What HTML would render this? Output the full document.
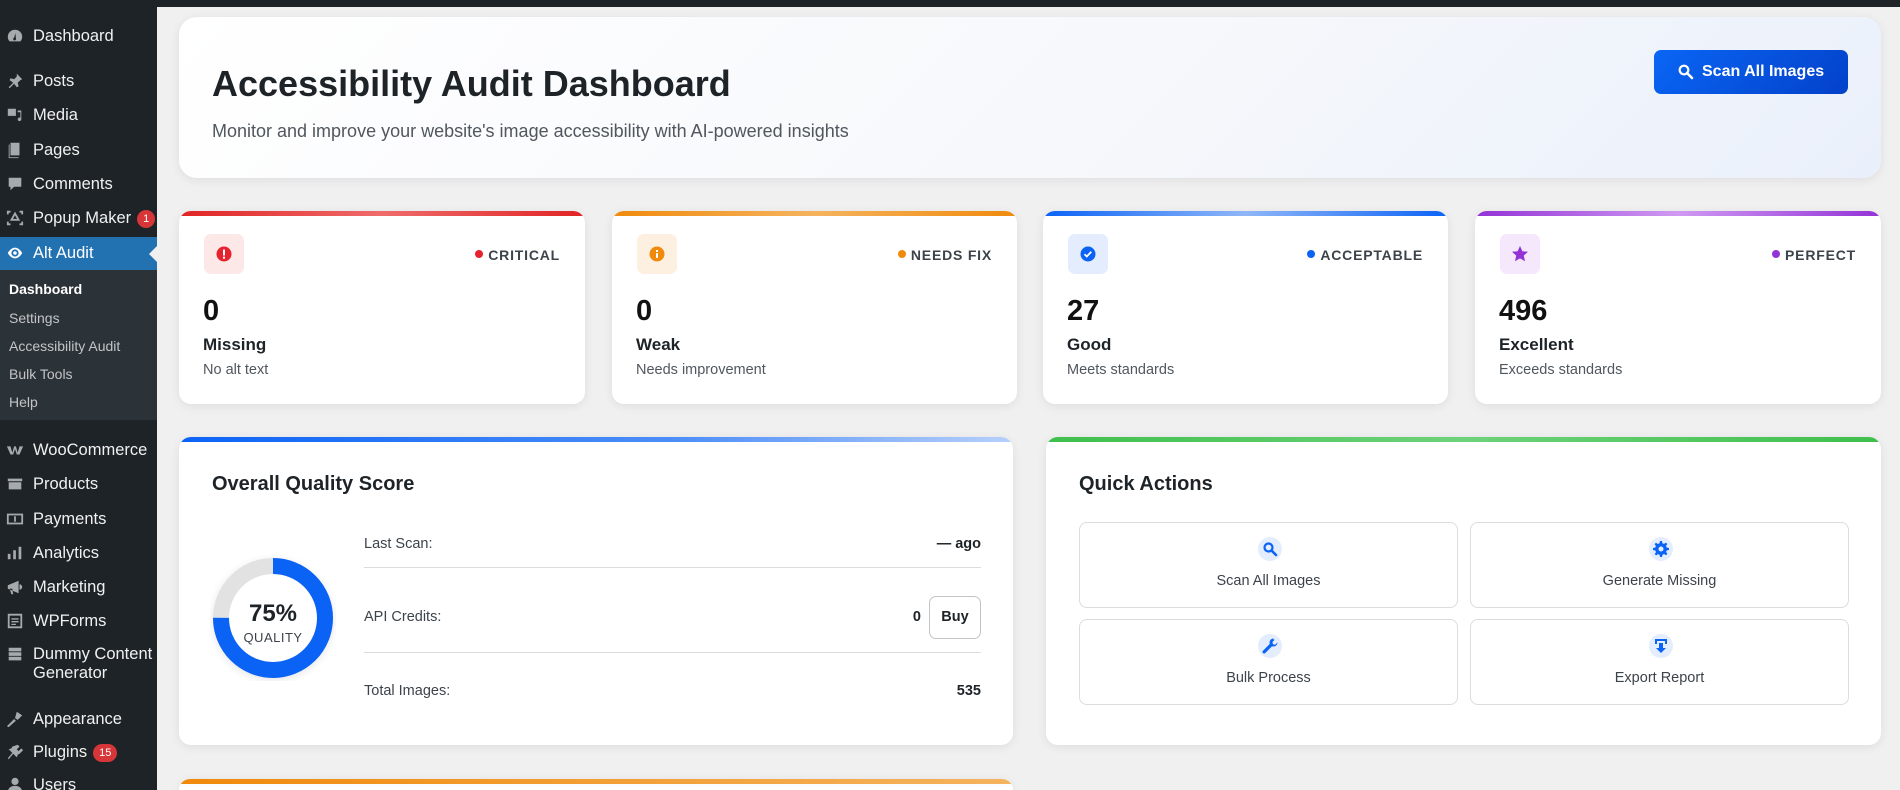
<!DOCTYPE html>
<html style="width:1900px;height:790px;overflow:hidden"><head><meta charset="utf-8"><style>
*{box-sizing:border-box;margin:0;padding:0}
body{width:1900px;height:790px;overflow:hidden;background:#f0f0f1;font-family:"Liberation Sans",Arial,sans-serif;position:relative}
.top{position:absolute;left:0;top:0;width:1900px;height:7px;background:#1d2327}
.side{position:absolute;left:0;top:0;width:157px;height:790px;background:#1d2327;overflow:hidden}
.mi{position:absolute;left:0;width:157px;color:#f0f0f1;font-size:16.5px;line-height:20px;padding-left:33px}
.mi .ic{position:absolute;left:6px;top:1px;width:18px;height:18px;fill:#a7aaad}
.sub{position:absolute;left:0;top:270px;width:157px;height:150px;background:#2c3338}
.si{position:absolute;left:9px;color:#c3c4c7;font-size:14px}
.badge{display:inline-block;background:#d63638;color:#fff;border-radius:10px;font-size:11px;line-height:18px;padding:0 6px;margin-left:6px;vertical-align:1px}
.card{position:absolute;background:#fff;border-radius:12px;box-shadow:0 2px 10px rgba(0,0,0,.08);overflow:hidden}
.bar{position:absolute;left:0;top:0;right:0;height:5px}
.stat .ib{position:absolute;left:25px;top:23px;width:40px;height:40px;border-radius:7px}
.stat .tag{position:absolute;right:25px;top:36px;font-size:14px;font-weight:bold;letter-spacing:.8px;color:#3c434a}
.stat .tag i{display:inline-block;width:8px;height:8px;border-radius:50%;margin-right:5px;vertical-align:2px}
.stat .n{position:absolute;left:24px;top:84px;font-size:29px;font-weight:bold;color:#111}
.stat .l{position:absolute;left:24px;top:124px;font-size:17px;font-weight:bold;color:#1d2327}
.stat .d{position:absolute;left:24px;top:151px;font-size:14.5px;color:#50575e}
h2{position:absolute;font-size:20px;font-weight:bold;color:#1d2327}
.row{position:absolute;left:185px;width:617px;font-size:14.5px;color:#3c434a}
.row b{position:absolute;right:0;color:#1d2327}
.qa{position:absolute;width:379px;height:86px;border:1px solid #dcdcde;border-radius:8px;text-align:center;font-size:14.5px;color:#3c434a}
.qa .c{position:absolute;left:178px;top:14px;width:24px;height:24px;border-radius:50%;background:#e3edfe}
.qa .c svg{position:absolute;left:4px;top:4px;width:16px;height:16px;fill:#0b63f6}
.qa span{position:absolute;left:0;right:0;top:50px}
</style></head><body>
<div class="top"></div>
<div class="side">
 <div class="mi" style="top:26px"><svg class="ic" viewBox="0 0 20 20"><path d="M10 3a8 8 0 0 0-8 8c0 2 .7 3.7 2 5h12a8 8 0 0 0 2-5 8 8 0 0 0-8-8zm1 10a1.5 1.5 0 1 1-2-1l1.5-5 .5 6z"/></svg>Dashboard</div>
 <div class="mi" style="top:71px"><svg class="ic" viewBox="0 0 20 20"><path d="M12 2l6 6-2 1-3 3 1 4-2 1-3-4-5 5-1-1 5-5-4-3 1-2 4 1 3-3z"/></svg>Posts</div>
 <div class="mi" style="top:105px"><svg class="ic" viewBox="0 0 20 20"><path d="M2 3h9v8H2zM13 5h4v10a2 2 0 1 1-1-2V7h-3z"/></svg>Media</div>
 <div class="mi" style="top:140px"><svg class="ic" viewBox="0 0 20 20"><path d="M5 2h10v14H5zM3 4h1v14h10v1H3z"/></svg>Pages</div>
 <div class="mi" style="top:174px"><svg class="ic" viewBox="0 0 20 20"><path d="M3 3h14v10H9l-4 4v-4H3z"/></svg>Comments</div>
 <div class="mi" style="top:208px"><svg class="ic" viewBox="0 0 20 20"><path d="M10 5l4 7H6zM2 6v-3h3M18 6V3h-3M2 14v3h3M18 14v3h-3" fill="none" stroke="#a7aaad" stroke-width="2"/></svg>Popup Maker<span class="badge">1</span></div>
 <div style="position:absolute;left:0;top:237px;width:157px;height:33px;background:#2271b1"></div>
 <div style="position:absolute;left:149px;top:246px;width:0;height:0;border:8px solid transparent;border-right-color:#f0f0f1;border-left:0"></div>
 <div class="mi" style="top:243px;color:#fff"><svg class="ic" viewBox="0 0 20 20" style="fill:#fff"><path d="M10 4C5 4 2 10 2 10s3 6 8 6 8-6 8-6-3-6-8-6zm0 10a4 4 0 1 1 0-8 4 4 0 0 1 0 8zm0-6a2 2 0 1 0 0 4 2 2 0 0 0 0-4z"/></svg>Alt Audit</div>
 <div class="sub"></div>
 <div class="si" style="top:281px;color:#fff;font-weight:bold">Dashboard</div>
 <div class="si" style="top:310px">Settings</div>
 <div class="si" style="top:338px">Accessibility Audit</div>
 <div class="si" style="top:366px">Bulk Tools</div>
 <div class="si" style="top:394px">Help</div>
 <div class="mi" style="top:440px"><svg class="ic" viewBox="0 0 20 20"><path d="M1 6h4l2 7 2-7h2l2 7 2-7h4l-4 9h-3l-2-6-2 6H5z"/></svg>WooCommerce</div>
 <div class="mi" style="top:474px"><svg class="ic" viewBox="0 0 20 20"><path d="M2 4h16v3H2zM3 8h14v8H3z"/></svg>Products</div>
 <div class="mi" style="top:509px"><svg class="ic" viewBox="0 0 20 20"><path d="M1 4h18v12H1zm2 2v8h14V6zm6 1h2v6H9z"/></svg>Payments</div>
 <div class="mi" style="top:543px"><svg class="ic" viewBox="0 0 20 20"><path d="M2 11h3v6H2zM8 7h3v10H8zM14 3h3v14h-3z"/></svg>Analytics</div>
 <div class="mi" style="top:577px"><svg class="ic" viewBox="0 0 20 20"><path d="M2 8l12-5v14L2 12zM4 12l2 6h2l-1-6zM15 7a3 3 0 0 1 0 6z"/></svg>Marketing</div>
 <div class="mi" style="top:611px"><svg class="ic" viewBox="0 0 20 20"><path d="M2 2h16v16H2zm2 2v12h12V4zm2 3h8v1.5H6zm0 3h8v1.5H6zm0 3h5v1.5H6z"/></svg>WPForms</div>
 <div class="mi" style="top:645px;line-height:19px"><svg class="ic" viewBox="0 0 20 20"><path d="M3 2h14v4H3zM3 7h14v4H3zM3 12h14v4H3z"/></svg>Dummy Content<br>Generator</div>
 <div class="mi" style="top:709px"><svg class="ic" viewBox="0 0 20 20"><path d="M12 2l6 4-5 5-3-2zM9 10l2 2-8 7-2-1z"/></svg>Appearance</div>
 <div class="mi" style="top:742px"><svg class="ic" viewBox="0 0 20 20"><path d="M13 2l2 2-3 3 2 2 3-3 2 2-4 4-2 1-1 3-4-4-5 6-1-1 5-6-4-4 3-1 1-2z"/></svg>Plugins<span class="badge">15</span></div>
 <div class="mi" style="top:775px"><svg class="ic" viewBox="0 0 20 20"><circle cx="10" cy="6" r="4"/><path d="M2 18c0-5 4-7 8-7s8 2 8 7z"/></svg>Users</div>
</div>

<div class="card" style="left:179px;top:17px;width:1702px;height:161px;background:linear-gradient(135deg,#fff 0%,#f5f7fb 60%,#eaf0fb 100%);border-radius:18px">
 <div style="position:absolute;left:33px;top:46px;font-size:36px;font-weight:bold;color:#1d2327">Accessibility Audit Dashboard</div>
 <div style="position:absolute;left:33px;top:104px;font-size:18px;color:#50575e">Monitor and improve your website's image accessibility with AI-powered insights</div>
 <div style="position:absolute;left:1475px;top:33px;width:194px;height:44px;border-radius:7px;background:linear-gradient(135deg,#0a66f5,#0341c9);color:#fff;font-weight:bold;font-size:16px;line-height:44px;padding-left:48px"><svg style="position:absolute;left:24px;top:14px" width="16" height="16" viewBox="0 0 16 16"><circle cx="6" cy="6" r="4.3" fill="none" stroke="#fff" stroke-width="2.2"/><path d="M9 9l5 5" stroke="#fff" stroke-width="2.6" stroke-linecap="round"/></svg>Scan All Images</div>
</div>

<div class="card stat" style="left:179px;top:211px;width:406px;height:193px">
 <div class="bar" style="background:linear-gradient(90deg,#e02424,#ef6b6b,#e02424)"></div>
 <div class="ib" style="background:#fde8e8"><svg style="position:absolute;left:12px;top:12px" width="16" height="16" viewBox="0 0 16 16"><circle cx="8" cy="8" r="7.5" fill="#e5222d"/><rect x="7" y="3.5" width="2" height="6" fill="#fff"/><rect x="7" y="10.7" width="2" height="2" fill="#fff"/></svg></div>
 <div class="tag"><i style="background:#e5222d"></i>CRITICAL</div>
 <div class="n">0</div><div class="l">Missing</div><div class="d">No alt text</div>
</div>
<div class="card stat" style="left:612px;top:211px;width:405px;height:193px">
 <div class="bar" style="background:linear-gradient(90deg,#f08a0c,#f5b35e,#f08a0c)"></div>
 <div class="ib" style="background:#fdf0e1"><svg style="position:absolute;left:12px;top:12px" width="16" height="16" viewBox="0 0 16 16"><circle cx="8" cy="8" r="7.5" fill="#f08a0c"/><rect x="7" y="7" width="2" height="5" fill="#fff"/><rect x="7" y="4" width="2" height="2" fill="#fff"/></svg></div>
 <div class="tag"><i style="background:#f08a0c"></i>NEEDS FIX</div>
 <div class="n">0</div><div class="l">Weak</div><div class="d">Needs improvement</div>
</div>
<div class="card stat" style="left:1043px;top:211px;width:405px;height:193px">
 <div class="bar" style="background:linear-gradient(90deg,#0b63f6,#8fb6f7,#0b63f6)"></div>
 <div class="ib" style="background:#e3edfe"><svg style="position:absolute;left:12px;top:12px" width="16" height="16" viewBox="0 0 16 16"><circle cx="8" cy="8" r="7.5" fill="#0b63f6"/><path d="M4.5 8.2l2.3 2.3 4.5-4.8" fill="none" stroke="#fff" stroke-width="1.8"/></svg></div>
 <div class="tag"><i style="background:#0b63f6"></i>ACCEPTABLE</div>
 <div class="n">27</div><div class="l">Good</div><div class="d">Meets standards</div>
</div>
<div class="card stat" style="left:1475px;top:211px;width:406px;height:193px">
 <div class="bar" style="background:linear-gradient(90deg,#9333d6,#cf9af2,#9333d6)"></div>
 <div class="ib" style="background:#f5e8fd"><svg style="position:absolute;left:11px;top:11px" width="18" height="18" viewBox="0 0 18 18"><path d="M9 1l2.4 5.2 5.6.6-4.2 3.8 1.2 5.6L9 13.4 4 16.2l1.2-5.6L1 6.8l5.6-.6z" fill="#9333d6"/></svg></div>
 <div class="tag"><i style="background:#9333d6"></i>PERFECT</div>
 <div class="n">496</div><div class="l">Excellent</div><div class="d">Exceeds standards</div>
</div>

<div class="card" style="left:179px;top:437px;width:834px;height:308px">
 <div class="bar" style="background:linear-gradient(90deg,#0b63f6,#4d8ef8 60%,#b7d0fb)"></div>
 <h2 style="left:33px;top:36px">Overall Quality Score</h2>
 <svg style="position:absolute;left:31px;top:118px" width="126" height="126" viewBox="0 0 126 126"><circle cx="63" cy="63" r="60" fill="#fff" style="filter:drop-shadow(0 2px 4px rgba(0,0,0,.1))"/><circle cx="63" cy="63" r="52" fill="none" stroke="#e2e2e2" stroke-width="16"/><circle cx="63" cy="63" r="52" fill="none" stroke="#0b63f6" stroke-width="16" stroke-dasharray="245 327" transform="rotate(-90 63 63)"/><text x="63" y="66" text-anchor="middle" font-family="Liberation Sans" font-weight="bold" font-size="24" fill="#1d2327">75%</text><text x="63" y="87" text-anchor="middle" font-family="Liberation Sans" font-size="13" fill="#3c434a" letter-spacing=".5">QUALITY</text></svg>
 <div class="row" style="top:99px">Last Scan:<b>— ago</b></div>
 <div style="position:absolute;left:185px;top:130px;width:617px;height:1px;background:#dcdcde"></div>
 <div class="row" style="top:172px">API Credits:<b style="right:60px">0</b></div>
 <div style="position:absolute;left:750px;top:159px;width:52px;height:43px;border:1px solid #c3c4c7;border-radius:7px;font-size:14.5px;font-weight:bold;color:#1d2327;text-align:center;line-height:41px">Buy</div>
 <div style="position:absolute;left:185px;top:215px;width:617px;height:1px;background:#dcdcde"></div>
 <div class="row" style="top:246px">Total Images:<b>535</b></div>
</div>

<div class="card" style="left:1046px;top:437px;width:835px;height:308px">
 <div class="bar" style="background:linear-gradient(90deg,#3ebf4b,#6ed27a,#3ebf4b)"></div>
 <h2 style="left:33px;top:36px">Quick Actions</h2>
 <div class="qa" style="left:33px;top:85px"><div class="c"><svg viewBox="0 0 16 16"><circle cx="6.5" cy="6.5" r="4" fill="none" stroke="#0b63f6" stroke-width="2.2"/><path d="M9.5 9.5l4.5 4.5" stroke="#0b63f6" stroke-width="2.6" stroke-linecap="round"/></svg></div><span>Scan All Images</span></div>
 <div class="qa" style="left:424px;top:85px"><div class="c"><svg viewBox="0 0 16 16"><path d="M7 0h2l.4 2.2 1.6.7 1.9-1.3 1.4 1.4-1.3 1.9.7 1.6L16 7v2l-2.2.4-.7 1.6 1.3 1.9-1.4 1.4-1.9-1.3-1.6.7L9 16H7l-.4-2.2-1.6-.7-1.9 1.3-1.4-1.4 1.3-1.9-.7-1.6L0 9V7l2.2-.4.7-1.6-1.3-1.9 1.4-1.4 1.9 1.3 1.6-.7zM8 5.5a2.5 2.5 0 1 0 0 5 2.5 2.5 0 0 0 0-5z"/></svg></div><span>Generate Missing</span></div>
 <div class="qa" style="left:33px;top:182px"><div class="c"><svg viewBox="0 0 16 16"><path d="M11.5 0.5a4 4 0 0 0-3.7 5.4L1 12.7a1.6 1.6 0 0 0 2.3 2.3l6.8-6.8A4 4 0 0 0 15.5 4.5l-2.3 2.3-2.2-.6-.6-2.2 2.3-2.3a4 4 0 0 0-1.2-.2z"/></svg></div><span>Bulk Process</span></div>
 <div class="qa" style="left:424px;top:182px"><div class="c"><svg viewBox="0 0 16 16"><path d="M2 1h12v5h-2V3H4v3H2zM6 5h4v5h3l-5 5-5-5h3z"/></svg></div><span>Export Report</span></div>
</div>

<div class="card" style="left:179px;top:779px;width:834px;height:11px;border-radius:12px 12px 0 0">
 <div class="bar" style="background:linear-gradient(90deg,#f08a0c,#f5b35e)"></div>
</div>
</body></html>
